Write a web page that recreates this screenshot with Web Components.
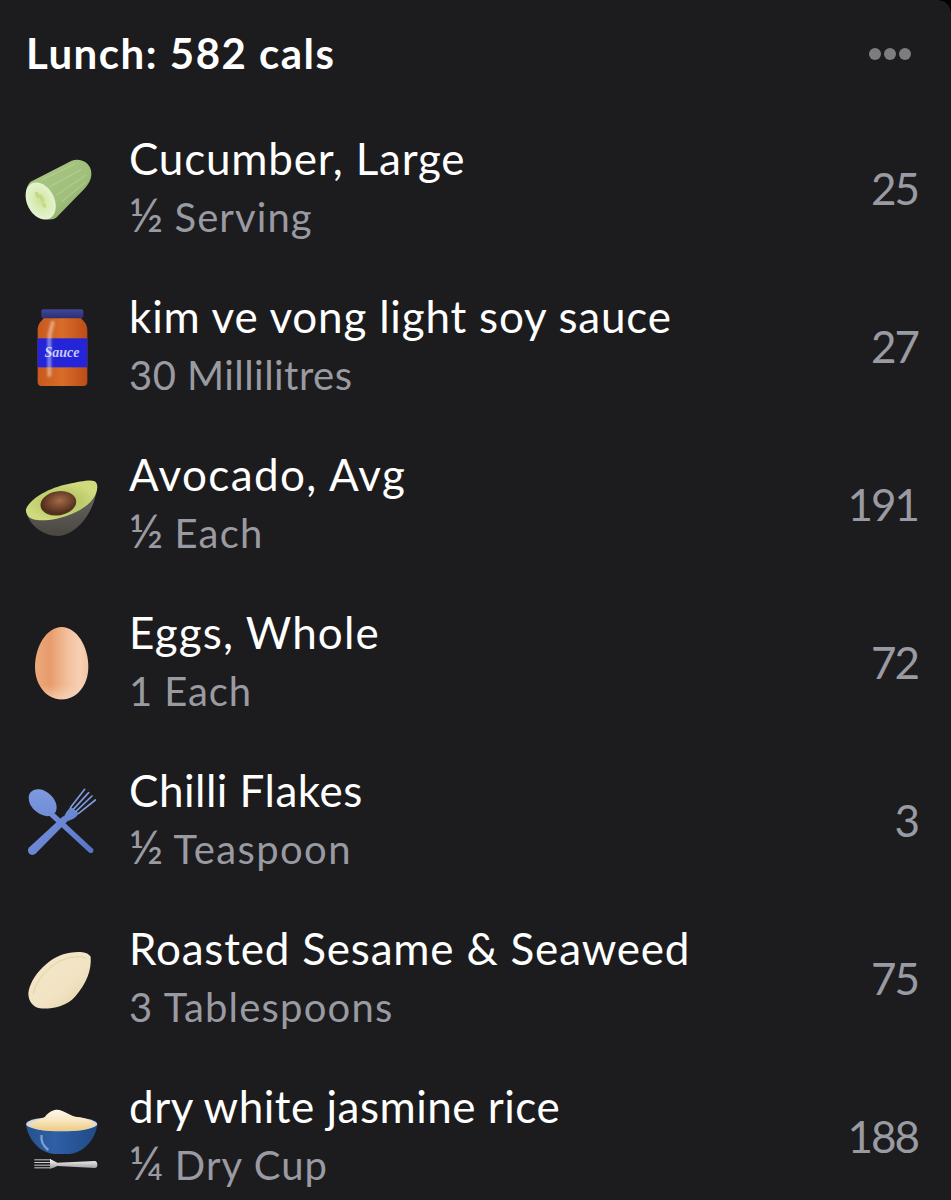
<!DOCTYPE html>
<html lang="en"><head><meta charset="utf-8"><title>Lunch</title>
<style>html,body{margin:0;padding:0;background:#1c1c1e;}</style></head>
<body>
<diary-card>
<diary-header slot="header" label="Lunch: 582 cals"></diary-header>
<food-row style="--as:1.1px" name="Cucumber, Large" amount="½ Serving" cals="25"><food-icon kind="cucumber"></food-icon></food-row>
<food-row style="--as:.45px" name="kim ve vong light soy sauce" amount="30 Millilitres" cals="27"><food-icon kind="jar"></food-icon></food-row>
<food-row style="--ns:1.4px;--as:1.2px" name="Avocado, Avg" amount="½ Each" cals="191"><food-icon kind="avocado"></food-icon></food-row>
<food-row style="--ns:1.1px;--as:.9px" name="Eggs, Whole" amount="1 Each" cals="72"><food-icon kind="egg"></food-icon></food-row>
<food-row style="--ns:.5px;--as:1.4px" name="Chilli Flakes" amount="½ Teaspoon" cals="3"><food-icon kind="cutlery"></food-icon></food-row>
<food-row style="--as:1.2px" name="Roasted Sesame &amp; Seaweed" amount="3 Tablespoons" cals="75"><food-icon kind="seed"></food-icon></food-row>
<food-row style="--ns:.5px;--as:1.1px" name="dry white jasmine rice" amount="¼ Dry Cup" cals="188"><food-icon kind="bowl"></food-icon></food-row>
</diary-card>
<script>
const ICONS={
cucumber:`<svg viewBox="66 57 216 240" width="72" height="80"><defs><linearGradient id="a" x1="0" y1="0" x2="1" y2="1"><stop offset="0" stop-color="#a9c883"/><stop offset=".6" stop-color="#a0bf7b"/><stop offset="1" stop-color="#7d9f5e"/></linearGradient><radialGradient id="b"><stop offset="0" stop-color="#d0e29c"/><stop offset=".45" stop-color="#d9ebb2"/><stop offset="1" stop-color="#e4f3d2"/></radialGradient></defs>
<path d="M92 155 L215 92 C245 83 272 100 274 128 C276 155 255 175 235 195 L170 262 C155 275 120 268 100 245 C78 220 68 178 92 155Z" fill="url(#a)"/>
<path d="M125 150 L225 102 M150 170 L245 118 M170 195 L258 135 M185 215 L258 155" stroke="#bdd69c" stroke-width="4" opacity=".55" fill="none"/>
<ellipse cx="122" cy="213" rx="41" ry="59" transform="rotate(-27 122 213)" fill="url(#b)"/>
<g fill="#c4d886"><ellipse cx="112" cy="195" rx="6" ry="10" transform="rotate(-27 112 195)"/><ellipse cx="125" cy="205" rx="6" ry="12" transform="rotate(-27 125 205)"/><ellipse cx="132" cy="225" rx="5" ry="9" transform="rotate(-27 132 225)"/></g></svg>`,
jar:`<svg viewBox="66 531 216 240" width="72" height="80"><defs><linearGradient id="a" x1="0" y1="0" x2="1" y2="0"><stop offset="0" stop-color="#c8591f"/><stop offset=".5" stop-color="#d86c28"/><stop offset="1" stop-color="#bb4c18"/></linearGradient><linearGradient id="c" x1="0" y1="0" x2="0" y2="1"><stop offset="0" stop-color="#40469a"/><stop offset="1" stop-color="#2b2f70"/></linearGradient><filter id="f" x="-100%" width="300%"><feGaussianBlur stdDeviation="3"/></filter></defs>
<path d="M132 563 H242 C252 575 262 580 262 602 V756 Q262 768 250 768 H125 Q113 768 113 756 V602 C113 580 123 575 132 563Z" fill="url(#a)"/>
<rect x="124" y="538" width="126" height="27" rx="6" fill="url(#c)"/>
<rect x="113" y="625" width="149" height="87" fill="#2424d8"/>
<text x="186" y="682" text-anchor="middle" font-family="Liberation Serif,serif" font-style="italic" font-weight="bold" font-size="42" fill="#c8cafa">Sauce</text>
<path d="M158 578 C155 595 148 605 148 630 V735" stroke="#fff" stroke-opacity=".42" stroke-width="12" fill="none" stroke-linecap="round" filter="url(#f)"/></svg>`,
avocado:`<svg viewBox="66 45 216 240" width="72" height="80"><defs><linearGradient id="a" x1="0" y1="0" x2="0" y2="1"><stop offset="0" stop-color="#6e6a64"/><stop offset="1" stop-color="#4a4642"/></linearGradient><radialGradient id="b" cx=".5" cy=".55"><stop offset="0" stop-color="#aab85c"/><stop offset="1" stop-color="#cfdb7c"/></radialGradient><radialGradient id="c" cx=".55" cy=".4"><stop offset="0" stop-color="#a56a48"/><stop offset="1" stop-color="#53301c"/></radialGradient></defs>
<path d="M78 180 C84 225 130 258 175 258 C228 255 284 190 292 108 Z" fill="url(#a)"/>
<path d="M78 178 C90 145 150 112 205 102 C240 95 270 88 284 94 C296 100 294 125 280 145 C262 172 220 195 170 206 C130 214 92 212 84 198 C80 192 77 185 78 178Z" fill="url(#b)"/>
<ellipse cx="175" cy="160" rx="54" ry="36" transform="rotate(-10 175 160)" fill="url(#c)"/></svg>`,
egg:`<svg viewBox="66 519 216 240" width="72" height="80"><defs><linearGradient id="a" x1="0" y1="0" x2="1" y2="0"><stop offset="0" stop-color="#eda97c"/><stop offset=".28" stop-color="#e79c6b"/><stop offset=".6" stop-color="#f2bf9b"/><stop offset=".85" stop-color="#f6d0b4"/><stop offset="1" stop-color="#f2c4a2"/></linearGradient><linearGradient id="r" x1="0" y1="0" x2="0" y2="1"><stop offset=".8" stop-color="#f8d8be" stop-opacity="0"/><stop offset="1" stop-color="#f8d8be" stop-opacity=".7"/></linearGradient></defs>
<path d="M185 531 C230 531 265 590 265 650 C265 708 228 748 185 748 C142 748 105 708 105 650 C105 590 140 531 185 531Z" fill="url(#a)"/><path d="M185 531 C230 531 265 590 265 650 C265 708 228 748 185 748 C142 748 105 708 105 650 C105 590 140 531 185 531Z" fill="url(#r)"/></svg>`,
cutlery:`<svg viewBox="66 33 216 240" width="72" height="80"><defs><linearGradient id="a" gradientUnits="userSpaceOnUse" x1="90" y1="60" x2="280" y2="250"><stop offset="0" stop-color="#7f9be0"/><stop offset="1" stop-color="#5673c8"/></linearGradient></defs>
<g fill="url(#a)" stroke="none"><ellipse cx="128" cy="98" rx="48" ry="33" transform="rotate(42 128 98)"/>
<path d="M150 120 L166 132 L280 238 Q282 252 268 248 L146 136Z"/>
<path d="M190 138 L204 152 L108 250 Q96 260 87 250 Q80 240 88 232Z"/>
<path d="M190 146 C196 128 205 118 212 110 L236 130 C232 140 220 148 204 153Z"/></g>
<g stroke="#7f9be0" stroke-width="5" stroke-linecap="round" fill="none"><path d="M212 112 L254 58M220 118 L266 68M228 124 L276 78M236 130 L286 90"/></g></svg>`,
seed:`<svg viewBox="66 507 216 240" width="72" height="80"><defs><linearGradient id="a" x1="0" y1="0" x2="1" y2="1"><stop offset="0" stop-color="#f4e8c8"/><stop offset=".6" stop-color="#f1e3c3"/><stop offset="1" stop-color="#e4d3a6"/></linearGradient></defs>
<path d="M85 670 C90 620 150 555 210 548 C235 545 262 544 272 560 C275 600 260 640 225 680 C200 710 150 718 120 715 C100 712 85 695 85 670Z" fill="url(#a)"/>
<path d="M100 672 C108 625 160 570 215 562 C235 560 252 558 258 566" fill="none" stroke="#e2d2a8" stroke-width="3"/></svg>`,
bowl:`<svg viewBox="66 981 216 240" width="72" height="80"><defs><linearGradient id="a" x1="0" y1="0" x2="1" y2="0"><stop offset="0" stop-color="#26528f"/><stop offset=".4" stop-color="#2f5fa6"/><stop offset="1" stop-color="#1f4a85"/></linearGradient><linearGradient id="b" x1="0" y1="0" x2="0" y2="1"><stop offset="0" stop-color="#fdf8ec"/><stop offset=".5" stop-color="#f7e6bf"/><stop offset="1" stop-color="#eeca82"/></linearGradient><linearGradient id="c" x1="0" y1="0" x2="0" y2="1"><stop offset="0" stop-color="#fff"/><stop offset="1" stop-color="#9a9a9c"/></linearGradient></defs>
<path d="M78 1065 C85 1110 120 1150 165 1152 H205 C250 1150 285 1110 292 1065Z" fill="url(#a)"/>
<ellipse cx="185" cy="1062" rx="107" ry="22" fill="#cfd8e6"/>
<path d="M86 1065 C100 1050 130 1045 135 1040 C150 1020 170 1015 185 1022 C205 1030 215 1040 240 1042 C262 1045 280 1055 284 1065 C270 1080 230 1083 185 1083 C140 1083 100 1080 86 1065Z" fill="url(#b)"/>
<path d="M125 1095 Q120 1120 145 1140" stroke="#9fc0e6" stroke-width="7" fill="none" opacity=".7"/>
<rect x="103" y="1168" width="50" height="3" fill="#ccc"/><rect x="103" y="1176" width="50" height="3" fill="#ccc"/><rect x="103" y="1184" width="50" height="3" fill="#ccc"/><rect x="103" y="1192" width="50" height="3" fill="#ccc"/>
<path d="M150 1167 Q160 1172 172 1178 L285 1173 Q293 1175 292 1188 Q290 1194 285 1194 L172 1188 Q160 1195 150 1196Z" fill="url(#c)"/></svg>`};
function def(name,html,init){customElements.define(name,class extends HTMLElement{connectedCallback(){if(this.shadowRoot)return;const r=this.attachShadow({mode:'open'});r.innerHTML=html;init&&init(this,r);}});}
def('diary-card',`<style>:host{display:flex;flex-direction:column;height:1200px;overflow:hidden;background:#1c1c1e;color:#fff;font-family:Lato,"Noto Sans",sans-serif;position:relative}
.corner{position:absolute;top:0;right:0;width:12px;height:12px;background:radial-gradient(circle at 0 100%,transparent 11px,#000 12px)}
::slotted(*){flex:none}</style>
<slot name="header"></slot><slot></slot><div class="corner"></div>`);
def('diary-header',`<style>:host{display:flex;align-items:center;justify-content:space-between;height:110px;padding:0 40px 2px 26px;box-sizing:border-box}
h1{margin:0 0 2px;font-size:42px;font-weight:700;color:#fff;letter-spacing:1.5px}
.more{display:flex;gap:3px}.more i{width:12px;height:12px;border-radius:50%;background:#7d7d80}</style>
<h1></h1><div class="more"><i></i><i></i><i></i></div>`,(h,r)=>{r.querySelector('h1').textContent=h.getAttribute('label');});
def('food-row',`<style>:host{display:flex;align-items:center;height:158px;padding:0 33px 0 22px;box-sizing:border-box}
.icon{width:72px;height:80px;margin-right:35px;flex:none}
.t{flex:1;min-width:0;display:flex;flex-direction:column;gap:0;padding-bottom:2px}
.n{font-size:44px;line-height:59px;color:#fff;letter-spacing:var(--ns,.8px);white-space:nowrap}
.a{font-size:40px;line-height:59px;color:#9a9aa2;letter-spacing:var(--as,.6px);white-space:nowrap}
.a b{font-weight:400;font-size:47px;line-height:1;letter-spacing:0}
.c{font-size:44px;color:#9a9aa2;letter-spacing:-2px;margin-bottom:2px}</style>
<div class="icon"><slot></slot></div><div class="t"><div class="n"></div><div class="a"></div></div><div class="c"></div>`,(h,r)=>{r.querySelector('.n').textContent=h.getAttribute('name');
const amt=h.getAttribute('amount'),a=r.querySelector('.a');
if(/^[½¼]/.test(amt)){const b=document.createElement('b');b.textContent=amt[0];a.append(b,amt.slice(1));}else a.textContent=amt;
r.querySelector('.c').textContent=h.getAttribute('cals');});
def('food-icon',`<style>:host{display:block;width:72px;height:80px}svg{display:block;overflow:visible}</style><div></div>`,(h,r)=>{r.querySelector('div').innerHTML=ICONS[h.getAttribute('kind')];});
</script>
</body></html>
